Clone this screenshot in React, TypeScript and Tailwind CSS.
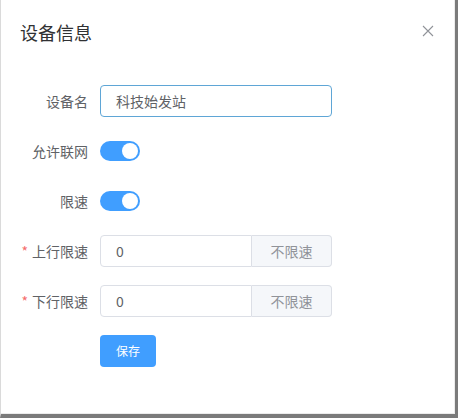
import React from "react";

function Switch() {
  return (
    <div className="relative h-5 w-10 rounded-full bg-[#409eff]">
      <span className="absolute right-[2px] top-[2px] h-4 w-4 rounded-full bg-white" />
    </div>
  );
}

function Label({ text, required }: { text: string; required?: boolean }) {
  return (
    <div className="flex w-20 shrink-0 items-center justify-end pr-3 text-sm text-[#606266]">
      {required && <span className="mr-1 text-[#f56c6c]">*</span>}
      {text}
    </div>
  );
}

function LimitInput() {
  return (
    <div className="flex h-8 w-[232px] text-sm">
      <div className="flex flex-1 items-center rounded-l border border-[#dcdfe6] px-[15px] text-[#606266]">0</div>
      <div className="flex w-20 items-center justify-center rounded-r border border-l-0 border-[#dcdfe6] bg-[#f5f7fa] text-[#909399]">
        不限速
      </div>
    </div>
  );
}

export default function App() {
  return (
    <div
      className="h-[418px] w-[458px] border-b-[4px] border-l border-r-[3px] border-b-[#7b7b7b] border-l-[#dadada] border-r-[#7b7b7b] bg-white"
      style={{ fontFamily: '"Noto Sans CJK SC", "Liberation Sans", sans-serif' }}
    >
      <div className="h-full border-b border-r border-[#ececec] pr-1 pb-1">
        <div className="flex items-start justify-between pl-[19px] pr-4 pt-[20px]">
          <h2 className="text-lg leading-6 text-[#303133]">设备信息</h2>
          <svg className="mt-[5px]" width="12" height="12" viewBox="0 0 12 12" fill="none" stroke="#909399" strokeWidth="1.1">
            <path d="M1 1L11 11M11 1L1 11" />
          </svg>
        </div>
        <div className="flex flex-col gap-[18px] pl-[19px] pr-5 pt-[41px]">
          <div className="flex h-8 items-center">
            <Label text="设备名" />
            <div className="flex h-8 w-[232px] items-center rounded border border-[#5fa6d6] px-[15px] text-sm text-[#606266]">
              科技始发站
            </div>
          </div>
          <div className="flex h-8 items-center">
            <Label text="允许联网" />
            <Switch />
          </div>
          <div className="flex h-8 items-center">
            <Label text="限速" />
            <Switch />
          </div>
          <div className="flex h-8 items-center">
            <Label text="上行限速" required />
            <LimitInput />
          </div>
          <div className="flex h-8 items-center">
            <Label text="下行限速" required />
            <LimitInput />
          </div>
          <div className="flex h-8 items-center">
            <div className="w-20 shrink-0" />
            <button className="h-8 w-14 rounded bg-[#409eff] text-xs text-white">保存</button>
          </div>
        </div>
      </div>
    </div>
  );
}
